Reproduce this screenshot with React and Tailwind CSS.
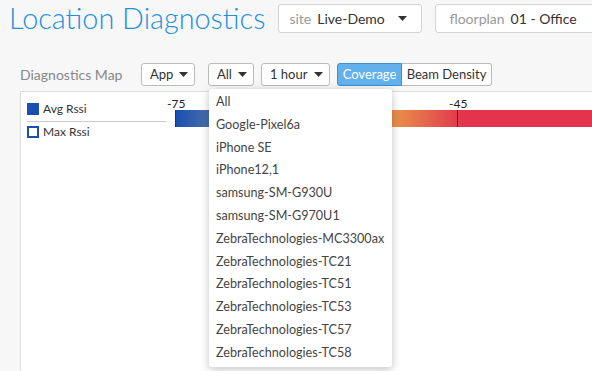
import React from 'react';

const devices = [
  "All",
  "Google-Pixel6a",
  "iPhone SE",
  "iPhone12,1",
  "samsung-SM-G930U",
  "samsung-SM-G970U1",
  "ZebraTechnologies-MC3300ax",
  "ZebraTechnologies-TC21",
  "ZebraTechnologies-TC51",
  "ZebraTechnologies-TC53",
  "ZebraTechnologies-TC57",
  "ZebraTechnologies-TC58",
];

function Caret() {
  return (
    <svg width="9" height="5" viewBox="0 0 9 5" className="shrink-0">
      <path d="M0 0 L9 0 L4.5 5 Z" fill="#333" />
    </svg>
  );
}

function SmallSelect({ label, width, children }) {
  return (
    <div
      className="relative h-[23px] flex items-center justify-between pl-[8px] pr-[6px] bg-white border border-[#bbb] rounded-[3px] text-[13px] text-[#333]"
      style={{ width }}
    >
      <span>{label}</span>
      <Caret />
      {children}
    </div>
  );
}

export default function App() {
  return (
    <div
      className="w-[592px] h-[371px] overflow-hidden bg-[#f7f7f7] relative"
      style={{ fontFamily: 'Lato, "Open Sans", sans-serif' }}
    >
      {/* Header */}
      <div className="flex items-center pt-[4px] h-[33px]">
        <h1 className="ml-[9px] text-[28.8px] font-light text-[#1e90dc] leading-none whitespace-nowrap">
          Location Diagnostics
        </h1>
        <div className="ml-[13px] w-[144px] h-[29px] shrink-0 flex items-center bg-white border border-[#d4d4d4] rounded-[3px] px-[10px] text-[14px]">
          <span className="text-[#999]">site</span>
          <span className="ml-[6px] text-[#333]">Live-Demo</span>
          <span className="ml-auto mr-[4px]"><Caret /></span>
        </div>
        <div className="ml-[13px] w-[200px] h-[29px] shrink-0 flex items-center bg-white border border-[#d4d4d4] rounded-[3px] px-[13px] text-[14px]">
          <span className="text-[#999]">floorplan</span>
          <span className="ml-[6px] text-[#333]">01 - Office</span>
        </div>
      </div>

      {/* Toolbar */}
      <div className="flex items-center mt-[30px] h-[23px]">
        <span className="ml-[20px] w-[121px] text-[14px] text-[#888]">Diagnostics Map</span>
        <SmallSelect label="App" width={54} />
        <div className="ml-[13px]">
          <SmallSelect label="All" width={46}>
            <div className="absolute z-20 left-[0px] top-[25px] w-[183px] h-[278px] bg-white rounded-[3px] shadow-[0_2px_8px_rgba(0,0,0,0.25)] pt-[2px] pl-[7px]">
              {devices.map((d) => (
                <div key={d} className="h-[22.8px] flex items-center text-[12.6px] text-[#444] whitespace-nowrap">
                  {d}
                </div>
              ))}
            </div>
          </SmallSelect>
        </div>
        <div className="ml-[7px]">
          <SmallSelect label="1 hour" width={69} />
        </div>
        <div className="ml-[7px] flex h-[23px] text-[13px]">
          <div className="w-[65px] flex items-center justify-center bg-[#62b0ec] border border-[#3b8fd3] rounded-l-[3px] text-white">
            Coverage
          </div>
          <div className="w-[90px] flex items-center justify-center bg-white border border-l-0 border-[#bbb] rounded-r-[3px] text-[#333]">
            Beam Density
          </div>
        </div>
      </div>

      {/* Map panel */}
      <div className="ml-[20px] mt-[5px] w-[620px] h-[300px] bg-white border border-[#ddd] flex">
        <div className="ml-[6px] mt-[11px] w-[140px] text-[12px] text-[#333]">
          <div className="flex items-center h-[12px]">
            <span className="w-[12px] h-[12px] bg-[#1a4fb0]" />
            <span className="ml-[4px]">Avg Rssi</span>
          </div>
          <div className="mt-[6px] border-t border-[#ccc]" />
          <div className="mt-[4px] flex items-center h-[12px]">
            <span className="w-[12px] h-[12px] border-2 border-[#1a4fb0]" />
            <span className="ml-[4px]">Max Rssi</span>
          </div>
        </div>
        <div className="relative ml-[8px] mt-[18px] w-[430px] h-[17px]">
          <div
            className="w-full h-full border-l border-[#333]"
            style={{
              background:
                'linear-gradient(to right, #1a4fb0 0%, #4a70a8 8%, #e8904a 51%, #e3334d 67%, #e3334d 100%)',
            }}
          />
          <div className="absolute left-[282px] top-0 w-[1px] h-full bg-[#6a1a24]" />
          <span className="absolute left-[-8px] top-[-12px] text-[12px] leading-none text-[#222]">-75</span>
          <span className="absolute left-[274px] top-[-12px] text-[12px] leading-none text-[#222]">-45</span>
        </div>
      </div>
    </div>
  );
}
